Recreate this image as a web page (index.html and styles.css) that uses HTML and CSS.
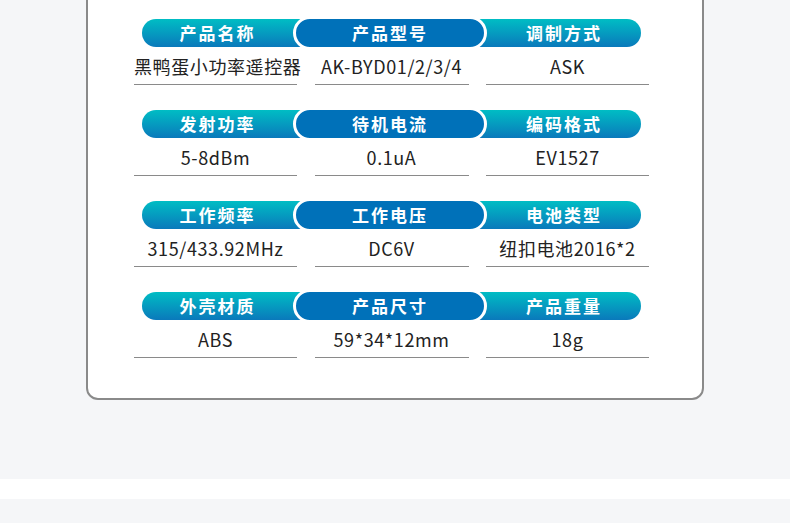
FILE: index.html
```html
<!DOCTYPE html>
<html lang="zh-CN">

<head>
    <meta charset="UTF-8">
    <meta name="viewport" content="width=device-width, initial-scale=1.0">
    <title>产品参数</title>
    <link rel="stylesheet" href="styles.css">
</head>

<body>
    <div class="card">
        <div class="specs">

            <div class="row">
                <div class="bar">
                    <span class="seg">产品名称</span>
                    <span class="seg mid">产品型号</span>
                    <span class="seg">调制方式</span>
                </div>
                <div class="values">
                    <span class="val">黑鸭蛋小功率遥控器</span>
                    <span class="val">AK-BYD01/2/3/4</span>
                    <span class="val">ASK</span>
                </div>
            </div>

            <div class="row">
                <div class="bar">
                    <span class="seg">发射功率</span>
                    <span class="seg mid">待机电流</span>
                    <span class="seg">编码格式</span>
                </div>
                <div class="values">
                    <span class="val">5-8dBm</span>
                    <span class="val">0.1uA</span>
                    <span class="val">EV1527</span>
                </div>
            </div>

            <div class="row">
                <div class="bar">
                    <span class="seg">工作频率</span>
                    <span class="seg mid">工作电压</span>
                    <span class="seg">电池类型</span>
                </div>
                <div class="values">
                    <span class="val">315/433.92MHz</span>
                    <span class="val">DC6V</span>
                    <span class="val">纽扣电池2016*2</span>
                </div>
            </div>

            <div class="row">
                <div class="bar">
                    <span class="seg">外壳材质</span>
                    <span class="seg mid">产品尺寸</span>
                    <span class="seg">产品重量</span>
                </div>
                <div class="values">
                    <span class="val">ABS</span>
                    <span class="val">59*34*12mm</span>
                    <span class="val">18g</span>
                </div>
            </div>

        </div>
    </div>

    <div class="band"></div>
</body>

</html>
```

FILE: styles.css
```css
:root{
    --teal: #00bdc4;
    --blue: #0a79bb;
    --deep: #0071b9;
    --line: #8a8a8a;
}
body {
    margin: 0;
    background: #f5f6f8;
    font-family: "Noto Sans CJK SC", "Noto Sans", sans-serif;
    overflow: hidden;
}

.card {
    box-sizing: border-box;
    width: 618px;
    margin: -30px auto 0;
    padding: 47px 0 40px 46px;
    background: #fff;
    border: 2px solid var(--line);
    border-radius: 12px;
}

.specs {
    width: 515px;
}

.row {
    margin-bottom: 25px;
}

.row:last-child {
    margin-bottom: 0;
}

.bar {
    display: grid;
    grid-template-columns: 151px 194px 1fr;
    height: 28px;
    margin: 0 8px;
    border-radius: 14px;
    background: linear-gradient(var(--teal), var(--blue));
}

.seg {
    display: flex;
    justify-content: center;
    align-items: center;
    color: #fff;
    font-size: 17px;
    font-weight: bold;
    letter-spacing: 2px;
    line-height: 28px;
}

.mid {
    margin: -3px 0;
    background: var(--deep);
    border: 3px solid #fff;
    border-radius: 17px;
}

.values {
    display: grid;
    grid-template-columns: 163px 154px 163px;
    justify-content: space-between;
}

.val {
    height: 29px;
    padding-top: 8px;
    border-bottom: 1px solid var(--line);
    text-align: center;
    color: #222;
    font-size: 18px;
    line-height: 22px;
    letter-spacing: 0.6px;
    white-space: nowrap;
}

.band {
    height: 20px;
    margin-top: 79px;
    background: #fff;
}
```
